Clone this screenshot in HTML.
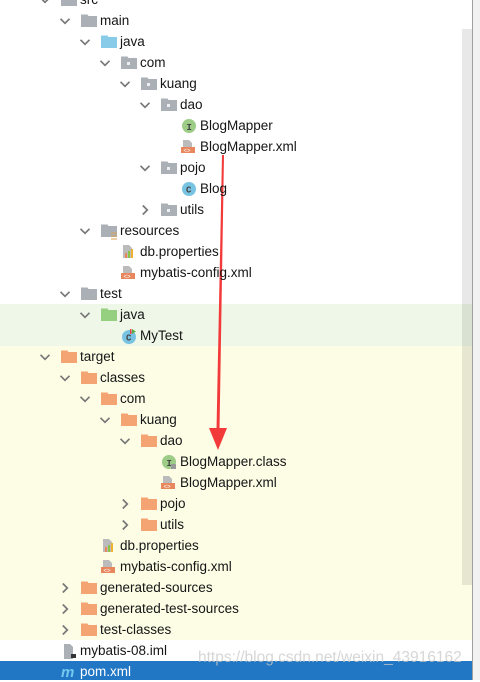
<!DOCTYPE html>
<html><head><meta charset="utf-8"><style>
body{margin:0;width:480px;height:680px;overflow:hidden;background:#fff;position:relative;font-family:"Liberation Sans","Noto Sans CJK SC",sans-serif;font-size:13.5px;color:#151515}
.bg{position:absolute;left:0;width:472px}
.r{position:absolute;height:21px;line-height:21px;white-space:nowrap}
.r span{position:absolute;left:18px;top:0}
</style></head><body>
<div class="bg" style="top:304px;height:42px;background:#eff8e8"></div>
<div class="bg" style="top:346px;height:294px;background:#fdfde6"></div>
<div class="bg" style="top:661px;height:19px;width:480px;background:#2277c4"></div>
<div style="position:absolute;left:462px;top:29px;width:10px;height:556px;background:rgba(0,0,0,0.09)"></div>
<div style="position:absolute;left:472px;top:0;width:1px;height:680px;background:#a0a0a0"></div>
<div style="position:absolute;left:473px;top:0;width:7px;height:680px;background:#f2f2f2"></div>
<svg style="position:absolute;left:0;top:0" width="480" height="680">
<defs>
<g id="cd"><path d="M-4.5,-2.2 L0,2.3 L4.5,-2.2" fill="none" stroke="#777" stroke-width="1.7"/></g>
<g id="cr"><path d="M-2.2,-4.5 L2.3,0 L-2.2,4.5" fill="none" stroke="#777" stroke-width="1.7"/></g>
</defs>
<g id="chev">
<use href="#cd" x="45" y="0"/><use href="#cd" x="65" y="21"/><use href="#cd" x="85" y="42"/><use href="#cd" x="105" y="63"/><use href="#cd" x="125" y="84"/><use href="#cd" x="145" y="105"/><use href="#cd" x="145" y="168"/><use href="#cr" x="145" y="210"/><use href="#cd" x="85" y="231"/><use href="#cd" x="65" y="294"/><use href="#cd" x="85" y="315"/>
<use href="#cd" x="45" y="357"/><use href="#cd" x="65" y="378"/><use href="#cd" x="85" y="399"/><use href="#cd" x="105" y="420"/><use href="#cd" x="125" y="441"/><use href="#cr" x="125" y="504"/><use href="#cr" x="125" y="525"/><use href="#cr" x="65" y="588"/><use href="#cr" x="65" y="609"/><use href="#cr" x="65" y="630"/>
</g>
<defs>
<g id="f"><path d="M-1,-6.5 h6.5 l1,1.5 h8.5 v11 h-16z"/></g>
<g id="pk"><path d="M-1,-6.5 h6.5 l1,1.5 h8.5 v11 h-16z"/><rect x="5" y="-1" width="3" height="3" fill="#fff" opacity=".8"/></g>
<g id="xml"><path d="M3,-7 h6 l3,3 v4 h-9z" fill="#bbb"/><rect x="1" y="0" width="14" height="6" fill="#e8875d"/><text x="3.5" y="5.5" font-size="6" fill="#fff" font-family="Liberation Sans">&lt;&gt;</text></g>
<g id="pr"><path d="M3,-7 h6 l3,3 v10 h-9z" fill="#bbb"/><rect x="5" y="1" width="2" height="5" fill="#e8875d"/><rect x="8" y="-1" width="2" height="7" fill="#8bc34a"/><rect x="11" y="-3" width="2" height="9" fill="#f0b030"/></g>
</defs>
<g fill="#aab0b6"><use href="#f" x="62" y="0"/><use href="#f" x="82" y="21"/><use href="#f" x="82" y="294"/></g>
<use href="#f" x="102" y="42" fill="#88cbe8"/>
<use href="#f" x="102" y="315" fill="#95cf80"/>
<g fill="#aab0b6"><use href="#pk" x="122" y="63"/><use href="#pk" x="142" y="84"/><use href="#pk" x="162" y="105"/><use href="#pk" x="162" y="168"/><use href="#pk" x="162" y="210"/></g>
<g fill="#f4a472"><use href="#f" x="62" y="357"/><use href="#f" x="82" y="378"/><use href="#f" x="102" y="399"/><use href="#f" x="122" y="420"/><use href="#f" x="142" y="441"/><use href="#f" x="142" y="504"/><use href="#f" x="142" y="525"/><use href="#f" x="82" y="588"/><use href="#f" x="82" y="609"/><use href="#f" x="82" y="630"/></g>
<path d="M101,224.5 h6.5 l1,1.5 h8.5 v11 h-16z" fill="#aab0b6"/><path d="M111,233h6M111,236h6M111,239h6" stroke="#d9a050" stroke-width="1"/>
<circle cx="189" cy="126" r="7" fill="#9ccc86"/><text x="186.5" y="130" font-size="9" font-weight="bold" fill="#444" font-family="Liberation Mono">I</text>
<use href="#xml" x="180" y="147"/>
<circle cx="189" cy="189" r="7" fill="#79c3e2"/><text x="186" y="192.5" font-size="9" font-weight="bold" fill="#444" font-family="Liberation Mono">C</text>
<use href="#pr" x="120" y="252"/><use href="#xml" x="120" y="273"/>
<circle cx="129" cy="337" r="7" fill="#79c3e2"/><text x="126" y="340.5" font-size="9" font-weight="bold" fill="#444" font-family="Liberation Mono">C</text><path d="M132,329 l4,2.5 l-4,2.5z" fill="#5cae4a"/><rect x="130" y="329" width="1.5" height="5" fill="#e44"/>
<circle cx="169" cy="462" r="7" fill="#9ccc86"/><text x="166.5" y="466" font-size="9" font-weight="bold" fill="#444" font-family="Liberation Mono">I</text><rect x="171" y="464" width="5" height="5" fill="#999"/>
<use href="#xml" x="160" y="483"/>
<use href="#pr" x="100" y="546"/><use href="#xml" x="100" y="567"/>
<path d="M64,644 h6 l3,3 v12 h-9z" fill="#aab0b6"/><rect x="71" y="654" width="5" height="4" fill="#333"/>
<text x="61" y="677" font-size="15" font-style="italic" font-weight="bold" fill="#74c8f0" font-family="Liberation Sans">m</text>
<path d="M222,155 L224,155 L219.5,430 L216.5,430 Z" fill="#f33a3a"/>
<path d="M209,428 L227,428 L218,450 Z" fill="#f33a3a"/>
</svg>
<div class="r" style="left:62px;top:-11px"><span>src</span></div>
<div class="r" style="left:82px;top:10px"><span>main</span></div>
<div class="r" style="left:102px;top:31px"><span>java</span></div>
<div class="r" style="left:122px;top:52px"><span>com</span></div>
<div class="r" style="left:142px;top:73px"><span>kuang</span></div>
<div class="r" style="left:162px;top:94px"><span>dao</span></div>
<div class="r" style="left:182px;top:115px"><span>BlogMapper</span></div>
<div class="r" style="left:182px;top:136px"><span>BlogMapper.xml</span></div>
<div class="r" style="left:162px;top:157px"><span>pojo</span></div>
<div class="r" style="left:182px;top:178px"><span>Blog</span></div>
<div class="r" style="left:162px;top:199px"><span>utils</span></div>
<div class="r" style="left:102px;top:220px"><span>resources</span></div>
<div class="r" style="left:122px;top:241px"><span>db.properties</span></div>
<div class="r" style="left:122px;top:262px"><span>mybatis-config.xml</span></div>
<div class="r" style="left:82px;top:283px"><span>test</span></div>
<div class="r" style="left:102px;top:304px"><span>java</span></div>
<div class="r" style="left:122px;top:325px"><span>MyTest</span></div>
<div class="r" style="left:62px;top:346px"><span>target</span></div>
<div class="r" style="left:82px;top:367px"><span>classes</span></div>
<div class="r" style="left:102px;top:388px"><span>com</span></div>
<div class="r" style="left:122px;top:409px"><span>kuang</span></div>
<div class="r" style="left:142px;top:430px"><span>dao</span></div>
<div class="r" style="left:162px;top:451px"><span>BlogMapper.class</span></div>
<div class="r" style="left:162px;top:472px"><span>BlogMapper.xml</span></div>
<div class="r" style="left:142px;top:493px"><span>pojo</span></div>
<div class="r" style="left:142px;top:514px"><span>utils</span></div>
<div class="r" style="left:102px;top:535px"><span>db.properties</span></div>
<div class="r" style="left:102px;top:556px"><span>mybatis-config.xml</span></div>
<div class="r" style="left:82px;top:577px"><span>generated-sources</span></div>
<div class="r" style="left:82px;top:598px"><span>generated-test-sources</span></div>
<div class="r" style="left:82px;top:619px"><span>test-classes</span></div>
<div class="r" style="left:62px;top:640px"><span>mybatis-08.iml</span></div>
<div class="r" style="left:62px;top:661px;color:#fff"><span>pom.xml</span></div>
<div style="position:absolute;left:198px;top:649px;font-size:15.5px;color:rgba(200,200,200,0.75);white-space:nowrap">https://blog.csdn.net/weixin_43916162</div>
</body></html>
